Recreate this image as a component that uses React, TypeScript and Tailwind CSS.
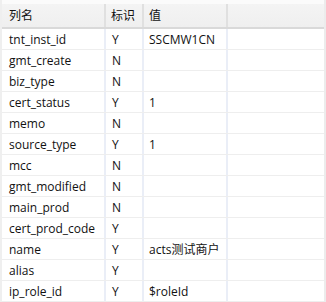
import React from "react";

const rows: [string, string, string][] = [
  ["tnt_inst_id", "Y", "SSCMW1CN"],
  ["gmt_create", "N", ""],
  ["biz_type", "N", ""],
  ["cert_status", "Y", "1"],
  ["memo", "N", ""],
  ["source_type", "Y", "1"],
  ["mcc", "N", ""],
  ["gmt_modified", "N", ""],
  ["main_prod", "N", ""],
  ["cert_prod_code", "Y", ""],
  ["name", "Y", "acts测试商户"],
  ["alias", "Y", ""],
  ["ip_role_id", "Y", "$roleId"],
];

export default function App() {
  return (
    <div
      className="w-[326px] h-[302px] overflow-hidden bg-white text-[12px] text-[#111111] flex"
      style={{ fontFamily: '"Open Sans", "Noto Sans CJK SC", sans-serif' }}
    >
      <div className="w-[2px] bg-[#efefef]" />
      <div className="flex-1 flex flex-col">
        <div className="h-[29px] flex flex-col bg-[#f9f9f9] border-b-2 border-[#d9d9d9]">
          <div className="h-[4px] bg-[#fbfbfb]" />
          <div className="flex-1 flex bg-gradient-to-b from-[#f4f4f4] to-[#efefef]">
            <div className="w-[104px] pl-[7px] pt-[1px] flex items-center border-r-2 border-r-[#e0e0e0]">列名</div>
            <div className="w-[38px] pl-[5px] pt-[1px] flex items-center border-r-2 border-r-[#e0e0e0]">标识</div>
            <div className="w-[84px] pl-[5px] pt-[1px] flex items-center border-r-2 border-r-[#e0e0e0]">值</div>
            <div className="flex-1" />
          </div>
        </div>
        {rows.map(([a, b, c]) => (
          <div key={a} className="h-[21px] flex border-b border-[#eeeeee]">
            <div className="w-[104px] pl-[7px] pt-[1px] flex items-center border-r-2 border-r-[#eaeef7]">{a}</div>
            <div className="w-[38px] pl-[6px] pt-[1px] flex items-center border-r-2 border-r-[#eaeef7]">{b}</div>
            <div className="w-[84px] pl-[5px] pt-[1px] flex items-center border-r-2 border-r-[#eaeef7]">{c}</div>
            <div className="flex-1" />
          </div>
        ))}
      </div>
      <div className="w-[2px] bg-[#ececec]" />
    </div>
  );
}
